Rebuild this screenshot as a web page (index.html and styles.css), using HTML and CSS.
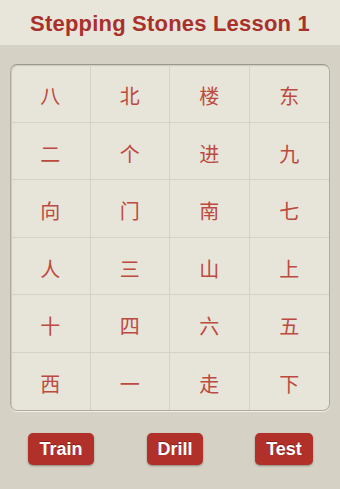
FILE: index.html
```html
<!DOCTYPE html>
<html>
<head>
<meta charset="utf-8">
<link rel="stylesheet" href="styles.css">
</head>
<body>
<header class="header"><h1 class="title">Stepping Stones Lesson 1</h1></header>
<main class="main">
  <div class="panel">
    <div class="cell">八</div><div class="cell">北</div><div class="cell">楼</div><div class="cell">东</div>
    <div class="cell">二</div><div class="cell">个</div><div class="cell">进</div><div class="cell">九</div>
    <div class="cell">向</div><div class="cell">门</div><div class="cell">南</div><div class="cell">七</div>
    <div class="cell">人</div><div class="cell">三</div><div class="cell">山</div><div class="cell">上</div>
    <div class="cell">十</div><div class="cell">四</div><div class="cell">六</div><div class="cell">五</div>
    <div class="cell">西</div><div class="cell">一</div><div class="cell">走</div><div class="cell">下</div>
  </div>
  <div class="buttons">
    <button class="btn btn-train">Train</button>
    <button class="btn btn-drill">Drill</button>
    <button class="btn btn-test">Test</button>
  </div>
</main>
</body>
</html>
```
FILE: styles.css
```css
html, body {
  margin: 0;
  padding: 0;
  width: 340px;
  height: 489px;
  overflow: hidden;
}
body {
  background: #d5d1c5;
  font-family: "Liberation Sans", Arial, sans-serif;
}
.header {
  height: 45px;
  background: #e8e5da;
  display: flex;
  align-items: center;
  justify-content: center;
}
.title {
  margin: 0;
  font-size: 22px;
  letter-spacing: 0.2px;
  font-weight: bold;
  color: #a9312b;
  padding-top: 2px;
}
.main {
  padding: 19px 10px 0 10px;
}
.panel {
  height: 347px;
  box-sizing: border-box;
  border: 1px solid #aeab9e;
  border-top-color: #9b988c;
  border-radius: 7px;
  background: #e7e4d9;
  box-shadow: inset 1px 1px 1px rgba(0,0,0,0.12), 0 1px 0 #f2f0e8;
  display: grid;
  grid-template-columns: repeat(4, 1fr);
  grid-template-rows: repeat(6, 1fr);
  overflow: hidden;
}
.cell {
  display: flex;
  align-items: center;
  justify-content: center;
  padding-top: 5px;
  font-family: "Noto Sans CJK SC", sans-serif;
  font-size: 20px;
  font-weight: 400;
  color: #bc4a40;
  border-right: 1px solid #d5d1c6;
  border-bottom: 1px solid #d5d1c6;
}
.cell:nth-child(4n) { border-right: none; }
.cell:nth-last-child(-n+4) { border-bottom: none; }
.buttons {
  display: flex;
  padding: 22px 0 0 18px;
}
.btn {
  height: 32px;
  border: none;
  border-radius: 5px;
  background: #b2302a;
  color: #fff;
  font-family: "Liberation Sans", Arial, sans-serif;
  font-weight: bold;
  font-size: 18px;
  padding: 0;
  box-shadow: 0 1px 2px rgba(0,0,0,0.35);
  text-shadow: 0 -1px 0 rgba(0,0,0,0.3);
}
.btn-train { width: 66px; }
.btn-drill { width: 56px; margin-left: 53px; }
.btn-test { width: 58px; margin-left: 52px; }
```
